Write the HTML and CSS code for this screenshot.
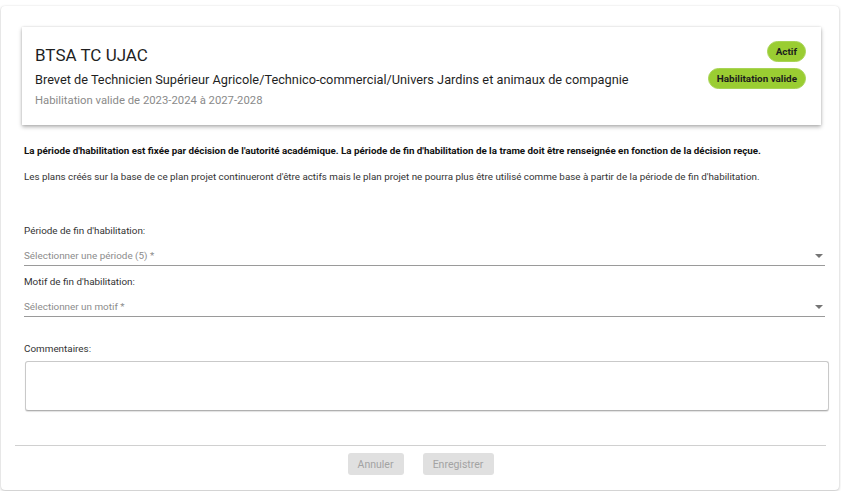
FILE: index.html
```html
<!DOCTYPE html>
<html lang="fr">
<head>
    <meta charset="UTF-8">
    <meta name="viewport" content="width=device-width, initial-scale=1.0">
    <title>Fin d'habilitation</title>
    <link rel="stylesheet" href="styles.css">
</head>
<body>
    <div class="dialog">
        <div class="head-card">
            <div class="head-info">
                <div class="title">BTSA TC UJAC</div>
                <div class="subtitle">Brevet de Technicien Supérieur Agricole/Technico-commercial/Univers Jardins et animaux de compagnie</div>
                <div class="period">Habilitation valide de 2023-2024 à 2027-2028</div>
            </div>
            <div class="chips">
                <span class="chip">Actif</span>
                <span class="chip">Habilitation valide</span>
            </div>
        </div>

        <div class="body">
            <p class="warn">La période d'habilitation est fixée par décision de l'autorité académique. La période de fin d'habilitation de la trame doit être renseignée en fonction de la décision reçue.</p>
            <p class="info">Les plans créés sur la base de ce plan projet continueront d'être actifs mais le plan projet ne pourra plus être utilisé comme base à partir de la période de fin d'habilitation.</p>

            <div class="field first">
                <label class="label">Période de fin d'habilitation:</label>
                <div class="select">
                    <span class="placeholder">Sélectionner une période (5) *</span>
                    <span class="arrow"></span>
                </div>
            </div>
            <div class="field">
                <label class="label">Motif de fin d'habilitation:</label>
                <div class="select">
                    <span class="placeholder">Sélectionner un motif *</span>
                    <span class="arrow"></span>
                </div>
            </div>
            <div class="field comments">
                <label class="label">Commentaires:</label>
                <textarea class="textarea"></textarea>
            </div>
        </div>

        <div class="actions">
            <button class="btn btn-cancel" disabled>Annuler</button>
            <button class="btn btn-save" disabled>Enregistrer</button>
        </div>
    </div>
</body>
</html>
```

FILE: styles.css
```css
*{
    box-sizing:border-box;
}
body{
    margin:0;
    background:#fff;
    font-family:Roboto, "Liberation Sans", Arial, sans-serif;
    color:#212121;
}
.dialog{
    margin:6px 2px 1px 1px;
    height:484px;
    border-radius:4px;
    background:#fff;
    box-shadow:0 1px 3px rgba(0,0,0,0.25), 0 0 1px rgba(0,0,0,0.08);
    padding:21px 0 0 0;
    display:flex;
    flex-direction:column;
}
.head-card{
    margin:0 18px 0 21px;
    height:98px;
    padding:14px 15px 0 13px;
    display:flex;
    justify-content:space-between;
    background:#fff;
    box-shadow:0 2px 4px rgba(0,0,0,0.3), 0 0 2px rgba(0,0,0,0.12);
}
.head-info{
    padding-top:1px;
}
.title{
    font-size:17px;
    line-height:24px;
    margin-top:1px;
    color:#1f1f1f;
}
.subtitle{
    font-size:12.75px;
    line-height:20px;
    margin-top:3px;
    color:#1f1f1f;
}
.period{
    font-size:11.3px;
    line-height:18px;
    margin-top:2px;
    color:#8a8a8a;
}
.chips{
    display:flex;
    flex-direction:column;
    align-items:flex-end;
    gap:6px;
}
.chip{
    display:inline-block;
    height:21px;
    line-height:19px;
    padding:0 8px;
    border-radius:11px;
    background:#9acd32;
    border:1px solid #a8d456;
    font-size:9.9px;
    font-weight:bold;
    color:#1c1c1c;
}
.body{
    padding:0 14px 0 23px;
    flex:1;
}
.warn{
    margin:18px 0 0 0;
    font-size:9.8px;
    line-height:16px;
    font-weight:bold;
    color:#111;
}
.info{
    margin:10px 0 0 0;
    font-size:9.8px;
    line-height:16px;
    color:#333;
}
.field{
    margin-top:8px;
}
.field.first{
    margin-top:38px;
}
.label{
    display:block;
    font-size:9.9px;
    line-height:16px;
    color:#333;
}
.select{
    margin-top:7px;
    height:20px;
    border-bottom:1px solid #9a9a9a;
    display:flex;
    justify-content:space-between;
    align-items:flex-start;
    padding-top:2px;
}
.placeholder{
    font-size:9.9px;
    line-height:16px;
    color:#8c8c8c;
}
.arrow{
    margin-top:6px;
    margin-right:2px;
    width:0;
    height:0;
    border-left:4px solid transparent;
    border-right:4px solid transparent;
    border-top:4px solid #757575;
}
.field.comments{
    margin-top:24px;
}
.textarea{
    display:block;
    margin-top:4px;
    margin-left:1px;
    width:804px;
    height:50px;
    border:1px solid #c9c9c9;
    border-bottom-color:#b0b0b0;
    border-radius:3px;
    resize:none;
    box-shadow:0 1px 1px rgba(0,0,0,0.12);
    font-family:inherit;
}
.actions{
    margin:0 13px 0 14px;
    border-top:1px solid #d0d0d0;
    height:45px;
    display:flex;
    justify-content:center;
    align-items:flex-start;
    gap:19px;
    padding-top:7px;
}
.btn{
    height:22px;
    border:none;
    border-radius:3px;
    background:#e0e0e0;
    color:#a3a3a3;
    font-family:inherit;
    font-size:10.5px;
    padding:0;
}
.btn-cancel{
    width:56px;
}
.btn-save{
    width:71px;
}
```
